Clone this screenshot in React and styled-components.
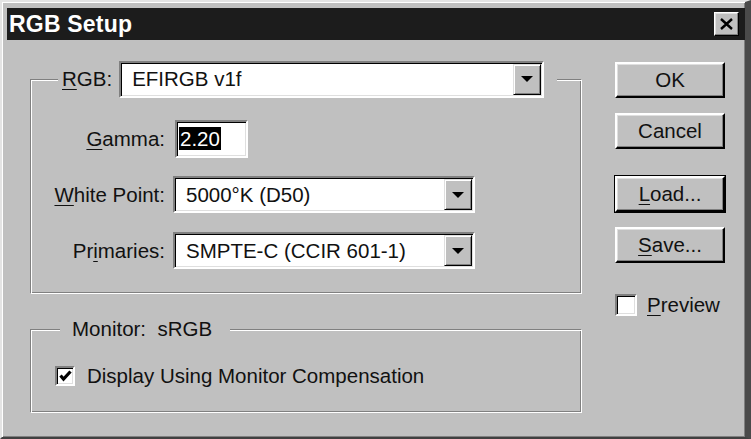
import React from "react";
import styled, { createGlobalStyle } from "styled-components";

const Global = createGlobalStyle`
  html, body {
    margin: 0;
    padding: 0;
    background: #c0c0c0;
  }
`;

const Window = styled.div`
  width: 751px;
  height: 439px;
  box-sizing: border-box;
  background: #c0c0c0;
  border-style: solid;
  border-width: 2px 6px 2px 2px;
  border-color: #e4e4e4 #4a4a4a #404040 #e4e4e4;
  box-shadow: inset 1px 1px 0 #fff, inset -1px -1px 0 #808080;
  padding: 6px 0 0 5px;
  display: flex;
  flex-direction: column;
  font-family: "Liberation Sans", Arial, sans-serif;
  font-size: 20.5px;
  color: #111;
`;

const TitleBar = styled.div`
  height: 32px;
  background: #1c1c1c;
  display: flex;
  align-items: center;
  justify-content: space-between;
  padding: 0 6px 0 2px;
`;

const Title = styled.span`
  color: #fff;
  font-weight: bold;
  font-size: 23px;
  letter-spacing: 0.2px;
`;

const CloseBtn = styled.div`
  width: 25px;
  height: 24px;
  box-sizing: border-box;
  background: #c0c0c0;
  border: 1px solid;
  border-color: #fff #000 #000 #fff;
  box-shadow: inset -1px -1px 0 #808080, inset 1px 1px 0 #dfdfdf;
  display: flex;
  align-items: center;
  justify-content: center;
`;

const Content = styled.div`
  flex: 1;
  display: flex;
  padding: 20px 0 0 23px;
  gap: 33px;
`;

const LeftCol = styled.div`
  width: 552px;
  display: flex;
  flex-direction: column;
  gap: 23px;
`;

const Group = styled.div`
  display: flex;
  flex-direction: column;
`;

const GroupHead = styled.div`
  height: ${p => p.$h}px;
  display: flex;
  align-items: center;
`;

const Corner = styled.div`
  align-self: flex-end;
  height: 50%;
  box-sizing: border-box;
  border-top: 1px solid #808080;
  ${p =>
    p.$side === "left"
      ? `
    width: ${p.$w}px;
    border-left: 1px solid #808080;
    box-shadow: inset 1px 1px 0 #fff;
  `
      : `
    flex: 1;
    border-right: 1px solid #fff;
    box-shadow: inset 0 1px 0 #fff, inset -1px 0 0 #808080;
  `}
`;

const Legend = styled.div`
  display: flex;
  align-items: center;
  gap: 7px;
  padding: ${p => p.$pad};
`;

const GroupBody = styled.div`
  box-sizing: border-box;
  border-left: 1px solid #808080;
  border-right: 1px solid #fff;
  border-bottom: 1px solid #fff;
  box-shadow: inset 1px 0 0 #fff, inset -1px -1px 0 #808080;
  padding: ${p => p.$pad};
  ${p => (p.$h ? `height: ${p.$h}px;` : "")}
`;

const FieldGrid = styled.div`
  display: grid;
  grid-template-columns: 134px auto;
  grid-auto-rows: 37px;
  column-gap: 8px;
  row-gap: 19px;
  align-items: center;
`;

const Label = styled.span`
  text-align: right;
  white-space: nowrap;
`;

const Key = styled.span`
  text-decoration: underline;
  text-underline-offset: 3px;
  text-decoration-thickness: 1px;
`;

const Sunken = styled.div`
  box-sizing: border-box;
  background: #fff;
  border: 2px solid;
  border-color: #808080 #fff #fff #808080;
  box-shadow: inset 1px 1px 0 #000, inset -1px -1px 0 #dfdfdf;
`;

const Select = styled(Sunken)`
  width: ${p => p.$w}px;
  height: 37px;
  display: flex;
  align-items: center;
  padding: 1px;
`;

const SelectText = styled.span`
  flex: 1;
  padding-left: 10px;
  white-space: nowrap;
`;

const ArrowBtn = styled.div`
  width: 28px;
  height: 100%;
  box-sizing: border-box;
  background: #c0c0c0;
  border: 1px solid;
  border-color: #dfdfdf #000 #000 #dfdfdf;
  box-shadow: inset 1px 1px 0 #fff, inset -1px -1px 0 #808080;
  display: flex;
  align-items: center;
  justify-content: center;
`;

const Arrow = styled.span`
  width: 0;
  height: 0;
  border-left: 6px solid transparent;
  border-right: 6px solid transparent;
  border-top: 6px solid #000;
`;

const GammaBox = styled(Sunken)`
  width: 73px;
  height: 38px;
  margin-left: 2px;
  display: flex;
  align-items: center;
  padding-left: 2px;
`;

const Selected = styled.span`
  background: #000;
  color: #fff;
  line-height: 23px;
  padding: 0 1px;
`;

const CheckRow = styled.label`
  display: flex;
  align-items: center;
  gap: ${p => p.$gap}px;
  white-space: nowrap;
`;

const CheckBox = styled(Sunken)`
  width: ${p => p.$size}px;
  height: ${p => p.$size}px;
  display: flex;
  align-items: center;
  justify-content: center;
`;

const RightCol = styled.div`
  width: 110px;
  display: flex;
  flex-direction: column;
  padding-top: 2px;
`;

const Button = styled.div`
  height: 36px;
  box-sizing: border-box;
  margin-top: ${p => p.$mt}px;
  background: #c0c0c0;
  border: 2px solid;
  border-color: #fff #000 #000 #fff;
  box-shadow: inset -1px -1px 0 #808080, inset 1px 1px 0 #dfdfdf
    ${p => (p.$default ? ", 0 0 0 1px #000" : "")};
  display: flex;
  align-items: center;
  justify-content: center;
`;

const PreviewRow = styled(CheckRow)`
  margin-top: 30px;
`;

const Check = () => (
  <svg width="13" height="12" viewBox="0 0 13 12">
    <polyline points="1.5,5.5 4.5,9 11.5,1.5" fill="none" stroke="#000" strokeWidth="3.2" />
  </svg>
);

export default function App() {
  return (
    <>
      <Global />
      <Window>
        <TitleBar>
          <Title>RGB Setup</Title>
          <CloseBtn>
            <svg width="13" height="12" viewBox="0 0 13 12">
              <path d="M1 1 L12 11 M12 1 L1 11" stroke="#000" strokeWidth="2.4" />
            </svg>
          </CloseBtn>
        </TitleBar>
        <Content>
          <LeftCol>
            <Group>
              <GroupHead $h={38}>
                <Corner $side="left" $w={28} />
                <Legend $pad="0 13px 0 4px">
                  <span>
                    <Key>R</Key>GB:
                  </span>
                  <Select $w={425}>
                    <SelectText>EFIRGB v1f</SelectText>
                    <ArrowBtn>
                      <Arrow />
                    </ArrowBtn>
                  </Select>
                </Legend>
                <Corner $side="right" />
              </GroupHead>
              <GroupBody $pad="22px 0 24px 0">
                <FieldGrid>
                  <Label>
                    <Key>G</Key>amma:
                  </Label>
                  <GammaBox>
                    <Selected>2.20</Selected>
                  </GammaBox>
                  <Label>
                    <Key>W</Key>hite Point:
                  </Label>
                  <Select $w={302}>
                    <SelectText>5000°K (D50)</SelectText>
                    <ArrowBtn>
                      <Arrow />
                    </ArrowBtn>
                  </Select>
                  <Label>
                    Pr<Key>i</Key>maries:
                  </Label>
                  <Select $w={302}>
                    <SelectText>SMPTE-C (CCIR 601-1)</SelectText>
                    <ArrowBtn>
                      <Arrow />
                    </ArrowBtn>
                  </Select>
                </FieldGrid>
              </GroupBody>
            </Group>
            <Group>
              <GroupHead $h={24}>
                <Corner $side="left" $w={30} />
                <Legend $pad="0 18px 0 12px">Monitor:&nbsp; sRGB</Legend>
                <Corner $side="right" />
              </GroupHead>
              <GroupBody $pad="23px 0 0 24px" $h={72}>
                <CheckRow $gap={12}>
                  <CheckBox $size={20}>
                    <Check />
                  </CheckBox>
                  Display Using Monitor Compensation
                </CheckRow>
              </GroupBody>
            </Group>
          </LeftCol>
          <RightCol>
            <Button $mt={0}>OK</Button>
            <Button $mt={15}>Cancel</Button>
            <Button $mt={27} $default>
              <span>
                <Key>L</Key>oad...
              </span>
            </Button>
            <Button $mt={15}>
              <span>
                <Key>S</Key>ave...
              </span>
            </Button>
            <PreviewRow $gap={10}>
              <CheckBox $size={22} />
              <span>
                <Key>P</Key>review
              </span>
            </PreviewRow>
          </RightCol>
        </Content>
      </Window>
    </>
  );
}
